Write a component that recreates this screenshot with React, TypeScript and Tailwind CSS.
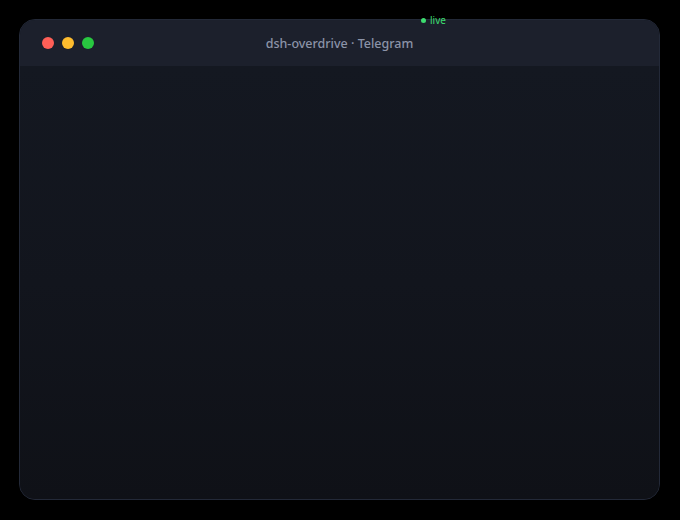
import React from "react";

export default function App() {
  return (
    <div className="w-[680px] h-[520px] bg-black p-[19px]" style={{ fontFamily: '"Noto Sans", "Open Sans", sans-serif' }}>
      <div className="relative w-[641px] h-[481px] rounded-[16px] border border-[#232938] overflow-hidden flex flex-col bg-[#10121a]">
        <div className="h-[46px] shrink-0 bg-[#1c202c] flex items-center px-[22px] relative">
          <div className="flex gap-2">
            <span className="w-3 h-3 rounded-full bg-[#ff5f57]" />
            <span className="w-3 h-3 rounded-full bg-[#febc2e]" />
            <span className="w-3 h-3 rounded-full bg-[#28c840]" />
          </div>
          <div className="absolute inset-0 flex items-center justify-center text-[12.5px] font-medium text-[#8b93a8] pt-[2px]">
            dsh-overdrive · Telegram
          </div>
        </div>
        <div className="flex-1 bg-gradient-to-b from-[#141821] via-[#12151d] to-[#0f1117]" />
      </div>
      <div className="absolute left-[421px] top-[13px] flex items-center gap-[4px] text-[10px] text-[#3ddc6f]">
        <span className="w-[5px] h-[5px] rounded-full bg-[#3ddc6f]" />
        <span>live</span>
      </div>
    </div>
  );
}
